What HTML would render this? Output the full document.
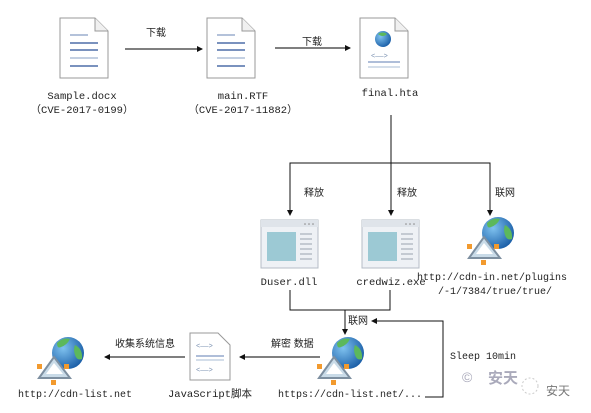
<!DOCTYPE html>
<html><head><meta charset="utf-8"><style>
html,body{margin:0;padding:0;background:#fff;}
svg{display:block}
text{font-family:"Liberation Mono","Noto Sans CJK SC",monospace;font-size:10.5px;fill:#222}
.c{font-family:"Liberation Sans","Noto Sans CJK SC",sans-serif;font-size:10px}
</style></head><body>
<svg width="591" height="413" viewBox="0 0 591 413" xmlns="http://www.w3.org/2000/svg">
<defs>
<marker id="a" markerWidth="6" markerHeight="6" refX="5" refY="3" orient="auto" markerUnits="userSpaceOnUse"><path d="M0,0 L6,3 L0,6z" fill="#111"/></marker>
<g id="doc">
<path d="M0,0 H35 L48,13 V60 H0z" fill="#fff" stroke="#999" stroke-width="1"/>
<path d="M35,0 V13 H48" fill="#f0f0f0" stroke="#999"/>
</g>
<g id="docl">
<line x1="10" y1="17" x2="28" y2="17" stroke="#6a86b4"/>
<line x1="10" y1="25" x2="38" y2="25" stroke="#4f6fa8" stroke-width="1.5"/>
<line x1="10" y1="32" x2="38" y2="32" stroke="#4f6fa8" stroke-width="1.5"/>
<line x1="10" y1="40" x2="38" y2="40" stroke="#8aa0c4"/>
<line x1="10" y1="48" x2="38" y2="48" stroke="#4f6fa8" stroke-width="1.5"/>
</g>
<g id="win">
<rect x="0" y="0" width="57" height="48" fill="#eef1f5" stroke="#b5bcc6"/>
<rect x="0" y="0" width="57" height="7" fill="#dfe4ea"/>
<circle cx="44" cy="4" r="0.8" fill="#888"/><circle cx="48" cy="4" r="0.8" fill="#888"/><circle cx="52" cy="4" r="0.8" fill="#888"/>
<rect x="6" y="12" width="29" height="29" fill="#9cc9d4"/>
<g stroke="#9aa4b0"><line x1="39" y1="14" x2="51" y2="14"/><line x1="39" y1="19" x2="51" y2="19"/><line x1="39" y1="24" x2="51" y2="24"/><line x1="39" y1="29" x2="51" y2="29"/><line x1="39" y1="34" x2="51" y2="34"/><line x1="39" y1="39" x2="51" y2="39"/></g>
</g>
<radialGradient id="gg" cx="0.35" cy="0.35" r="0.7"><stop offset="0" stop-color="#7fc2ef"/><stop offset="1" stop-color="#1b5fa8"/></radialGradient>
<g id="glb">
<circle cx="13" cy="-2" r="16" fill="url(#gg)"/>
<path d="M2,-12 Q8,-18 15,-16 Q12,-10 6,-8 Q2,-6 2,-12z" fill="#5cb85c"/>
<path d="M20,-10 Q28,-6 27,4 Q22,6 20,0 Q18,-6 20,-10z" fill="#5cb85c"/>
<path d="M-16,23 L-1,2 L15,23z" fill="#c9dbe8" stroke="#7d8fa0" stroke-width="2"/>
<path d="M-9,19 L-1,8 L8,19z" fill="#fff"/>
<rect x="-18" y="9" width="5" height="5" fill="#f29a2e"/>
<rect x="9" y="9" width="5" height="5" fill="#f29a2e"/>
<rect x="-4" y="25" width="5" height="5" fill="#f29a2e"/>
</g>
</defs>
<!-- top row -->
<use href="#doc" x="60" y="18"/><use href="#docl" x="60" y="18"/>
<text x="82" y="99" text-anchor="middle">Sample.docx</text>
<text x="82" y="113" text-anchor="middle">（CVE-2017-0199）</text>
<line x1="125" y1="49" x2="202" y2="49" stroke="#333" stroke-width="1.3" marker-end="url(#a)"/>
<text class="c" x="146" y="36">下载</text>
<use href="#doc" x="207" y="18"/><use href="#docl" x="207" y="18"/>
<text x="243" y="99" text-anchor="middle">main.RTF</text>
<text x="243" y="113" text-anchor="middle">（CVE-2017-11882）</text>
<line x1="275" y1="48" x2="350" y2="48" stroke="#333" stroke-width="1.3" marker-end="url(#a)"/>
<text class="c" x="302" y="45">下载</text>
<use href="#doc" x="360" y="18"/>
<circle cx="383" cy="39" r="8" fill="url(#gg)"/><path d="M378,34 Q383,31 387,34 Q383,38 378,34z" fill="#5cb85c"/>
<text x="371" y="58" style="font-size:7px;fill:#7a90b0">&lt;——&gt;</text>
<line x1="368" y1="62" x2="400" y2="62" stroke="#5f7eb3"/>
<line x1="368" y1="67" x2="400" y2="67" stroke="#a9bcd6"/>
<text x="390" y="96" text-anchor="middle">final.hta</text>
<!-- tree -->
<line x1="391" y1="115" x2="391" y2="213" stroke="#111"/>
<path d="M290,213 V163 H490 V213" fill="none" stroke="#111"/>
<line x1="290" y1="190" x2="290" y2="215" stroke="#111" marker-end="url(#a)"/>
<line x1="391" y1="190" x2="391" y2="215" stroke="#111" marker-end="url(#a)"/>
<line x1="490" y1="190" x2="490" y2="215" stroke="#111" marker-end="url(#a)"/>
<text class="c" x="304" y="196">释放</text>
<text class="c" x="397" y="196">释放</text>
<text class="c" x="495" y="196">联网</text>
<use href="#win" x="261" y="220"/>
<use href="#win" x="362" y="220"/>
<text x="289" y="285" text-anchor="middle">Duser.dll</text>
<text x="391" y="285" text-anchor="middle">credwiz.exe</text>
<use href="#glb" x="485" y="235"/>
<text x="492" y="280" text-anchor="middle" style="font-size:10px">http://cdn-in.net/plugins</text>
<text x="495" y="294" text-anchor="middle" style="font-size:10px">/-1/7384/true/true/</text>
<!-- loop -->
<path d="M290,290 V310 H390 V290" fill="none" stroke="#111"/>
<line x1="345" y1="310" x2="345" y2="334" stroke="#111" marker-end="url(#a)"/>
<text class="c" x="348" y="324">联网</text>
<path d="M425,397 H443 V321 H372" fill="none" stroke="#111" marker-end="url(#a)"/>
<text x="450" y="359" style="font-size:10px">Sleep 10min</text>
<!-- bottom -->
<use href="#glb" x="335" y="355"/>
<text x="350" y="397" text-anchor="middle" style="font-size:10px">https://cdn-list.net/...</text>
<line x1="320" y1="357" x2="240" y2="357" stroke="#333" stroke-width="1.3" marker-end="url(#a)"/>
<text class="c" x="271" y="347">解密 数据</text>
<path d="M190,333 H218 L230,345 V380 H190z" fill="#fff" stroke="#999"/>
<text x="196" y="348" style="font-size:7px;fill:#7a90b0">&lt;——&gt;</text>
<line x1="196" y1="356" x2="224" y2="356" stroke="#5f7eb3"/>
<line x1="196" y1="360" x2="224" y2="360" stroke="#a9bcd6"/>
<text x="196" y="372" style="font-size:7px;fill:#7a90b0">&lt;——&gt;</text>
<text x="210" y="397" text-anchor="middle" style="font-size:10.5px">JavaScript脚本</text>
<line x1="185" y1="357" x2="105" y2="357" stroke="#333" stroke-width="1.3" marker-end="url(#a)"/>
<text class="c" x="115" y="347">收集系统信息</text>
<use href="#glb" x="55" y="355"/>
<text x="75" y="397" text-anchor="middle" style="font-size:10px">http://cdn-list.net</text>
<!-- watermark -->
<text class="c" x="462" y="382" style="font-size:14px;fill:#aab">©</text>
<text class="c" x="488" y="383" style="font-size:15px;font-weight:bold;fill:#aab">安天</text>
<circle cx="530" cy="386" r="8" fill="none" stroke="#ccc" stroke-dasharray="2,2"/>
<text class="c" x="546" y="395" style="font-size:12px;fill:#777">安天</text>
</svg>
</body></html>
